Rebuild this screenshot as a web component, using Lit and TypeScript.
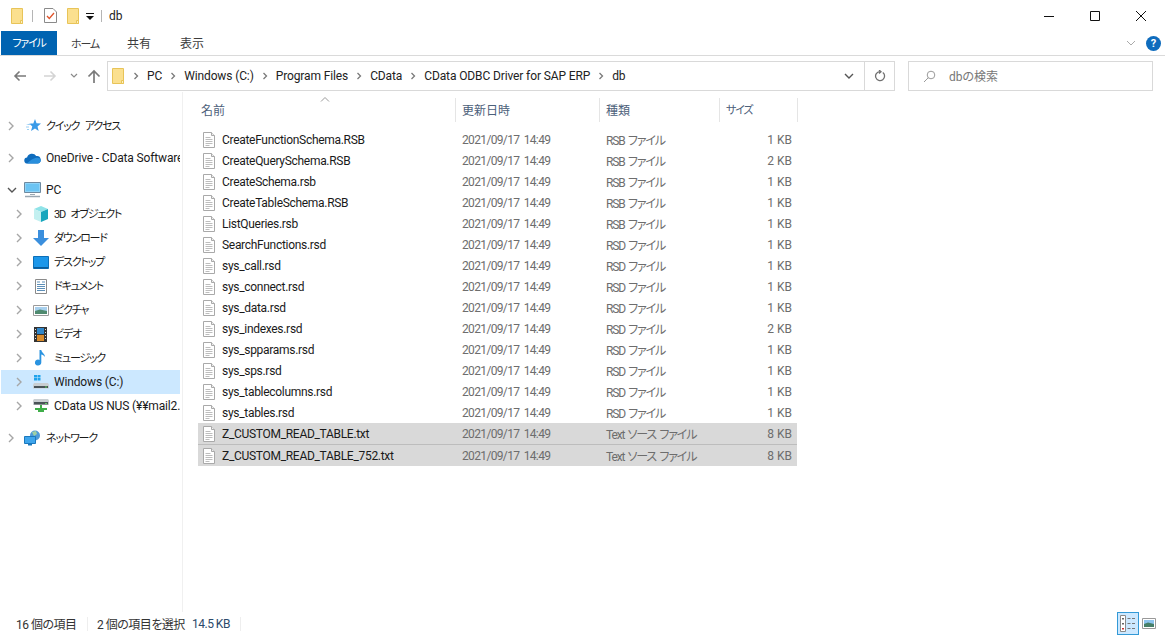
import { LitElement, css, html, svg } from "lit";
import { customElement } from "lit/decorators.js";

const folder = svg`<svg class="ic" width="14" height="16" viewBox="0 0 14 16"><path d="M1.500 .5h11v15h-11z" fill="#fbe08f" stroke="#e8c458"/><path d="M10.500 12.500h2v3h-2z" fill="#fdf0c0" stroke="#e8c458"/></svg>`;

const chevR = svg`<svg width="8" height="10" viewBox="0 0 8 10"><path d="M2 1l4 4-4 4" fill="none" stroke="#a6a6a6" stroke-width="1.400"/></svg>`;
const crumbSep = svg`<svg width="6" height="8" viewBox="0 0 6 8"><path d="M1.500 1l3 3-3 3" fill="none" stroke="#7a7a7a" stroke-width="1.300"/></svg>`;
const chevD = svg`<svg width="10" height="8" viewBox="0 0 10 8"><path d="M1 2l4 4 4-4" fill="none" stroke="#555" stroke-width="1.400"/></svg>`;

const fileIcon = svg`<svg width="14" height="16" viewBox="0 0 14 16"><path d="M1.500 .5h8l3 3v12h-11z" fill="#fff" stroke="#a9a9a9"/><path d="M9.500 .5v3h3" fill="#eee" stroke="#a9a9a9"/><path d="M3.500 5.500h5M3.500 7.500h7M3.500 9.500h7M3.500 11.500h7M3.500 13.500h4" stroke="#bdbdbd"/></svg>`;

const navIcons: Record<string, unknown> = {
  star: svg`<svg width="16" height="16" viewBox="0 0 16 16"><path d="M10 1l1.500 4.200 4.500.3-3.500 2.900 1.200 4.600-3.700-2.600L6 13l1.300-4.600-2-1.800L1 6.500l5-.9H8.300z" fill="#3a9be8"/><path d="M1 9h3M2 11.500h2" stroke="#9cd0f5"/></svg>`,
  cloud: svg`<svg width="17" height="12" viewBox="0 0 17 12"><path d="M3.500 11.500a3 3 0 0 1-.4-6A5 5 0 0 1 12.200 4a3.800 3.800 0 0 1 1.300 7.500z" fill="#0f6cbd"/><path d="M3 11.500h11a3 3 0 0 0 2-5C13 5 9 6 3 11.500z" fill="#2a8fdc"/></svg>`,
  pc: svg`<svg width="17" height="16" viewBox="0 0 17 16"><path d="M.5 .5h16v10H.5z" fill="#8fd3f7" stroke="#6e8aa0"/><path d="M2 2h13v7H2z" fill="#6cc4f3"/><path d="M6 12h5v1H6z" fill="#9aa7b1"/><path d="M1 14.500h15" stroke="#9aa7b1" stroke-width="1.500"/></svg>`,
  cube: svg`<svg width="16" height="16" viewBox="0 0 16 16"><path d="M8 0l7 3-7 3-7-3z" fill="#8fe3e8"/><path d="M1 3l7 3v10l-7-3z" fill="#c3f0f0"/><path d="M15 3L8 6v10l7-3z" fill="#17a6bd"/></svg>`,
  down: svg`<svg width="16" height="16" viewBox="0 0 16 16"><path d="M5 0h6v8h5l-8 8-8-8h5z" fill="#3b8fdd"/></svg>`,
  desk: svg`<svg width="16" height="13" viewBox="0 0 16 13"><path d="M.5 .5h15v12H.5z" fill="#1c97ea" stroke="#0c6fb8"/><path d="M1 11h14v1.500H1z" fill="#0b5c99"/></svg>`,
  doc: svg`<svg width="12" height="15" viewBox="0 0 12 15"><path d="M.5 .5h11v14H.5z" fill="#fff" stroke="#8a8a8a"/><path d="M2 3h3M7 3h3M2 5.500h8M2 7.500h8M2 9.500h8M2 11.500h8" stroke="#5d8fb8"/></svg>`,
  pic: svg`<svg width="16" height="11" viewBox="0 0 16 11"><path d="M.5 .5h15v10H.5z" fill="#fff" stroke="#9a9a9a"/><path d="M2 2h12v4H2z" fill="#a8d0ee"/><path d="M2 6l5-1.500L14 6v3H2z" fill="#4f8a6f"/></svg>`,
  film: svg`<svg width="13" height="15" viewBox="0 0 13 15"><path d="M0 0h13v15H0z" fill="#333"/><path d="M3 1h7v6H3z" fill="#2f86c9"/><path d="M3 8h7v6H3z" fill="#d98b2b"/><path d="M1 2h1v1H1zM1 5h1v1H1zM1 8h1v1H1zM1 11h1v1H1zM11 2h1v1h-1zM11 5h1v1h-1zM11 8h1v1h-1zM11 11h1v1h-1z" fill="#ddd"/></svg>`,
  note: svg`<svg width="11" height="16" viewBox="0 0 11 16"><path d="M4.500 0h1.800c.4 2.500 3.500 3.500 3.700 7-1-1.500-2.500-2.300-3.700-2.500v8a3.200 3 0 1 1-1.800-2.600z" fill="#2a93e0"/></svg>`,
  win: svg`<svg width="16" height="14" viewBox="0 0 16 14"><path d="M1 0h3v2.500H1zM4.500 0h3v2.500h-3zM1 3h3v2.500H1zM4.500 3h3v2.500h-3z" fill="#1fa3ec"/><path d="M1 8h14l1 2v3.500H0V10z" fill="#c9ced1"/><path d="M1 11h14v2H1z" fill="#4a5357"/><path d="M12 11.500h2v1h-2z" fill="#5fd35f"/></svg>`,
  net: svg`<svg width="16" height="16" viewBox="0 0 16 16"><path d="M1 1h14l1 1.500V7H0V2.500z" fill="#c9ced1"/><path d="M1 4h14v2.500H1z" fill="#4a5357"/><path d="M12 5h2v1h-2z" fill="#5fd35f"/><path d="M7 7h2v3h5v2H2v-2h5z" fill="#3fae49"/><path d="M5 12h6v2H5z" fill="#3fae49"/></svg>`,
  globe: svg`<svg width="17" height="16" viewBox="0 0 17 16"><circle cx="11" cy="5.500" r="5" fill="#4e9ad8"/><path d="M8 2l4-1 1 3-3 2z" fill="#9fd0a4"/><path d="M.5 6.500h11v7H.5z" fill="#3ea5ec" stroke="#1b78bd"/><path d="M4 14h4v1.500H4z" fill="#1b78bd"/></svg>`,
};

type NavRow = { label: string; icon: string; level: number; open?: boolean; sel?: boolean; gap?: boolean; jp?: boolean };

const navRows: NavRow[] = [
  { label: "クイック アクセス", icon: "star", level: 0, jp: true },
  { label: "OneDrive - CData Software", icon: "cloud", level: 0, gap: true },
  { label: "PC", icon: "pc", level: 0, open: true, gap: true },
  { label: "3D オブジェクト", icon: "cube", level: 1, jp: true },
  { label: "ダウンロード", icon: "down", level: 1, jp: true },
  { label: "デスクトップ", icon: "desk", level: 1, jp: true },
  { label: "ドキュメント", icon: "doc", level: 1, jp: true },
  { label: "ピクチャ", icon: "pic", level: 1, jp: true },
  { label: "ビデオ", icon: "film", level: 1, jp: true },
  { label: "ミュージック", icon: "note", level: 1, jp: true },
  { label: "Windows (C:)", icon: "win", level: 1, sel: true },
  { label: "CData US NUS (¥¥mail2.cdata.jp)", icon: "net", level: 1 },
  { label: "ネットワーク", icon: "globe", level: 0, gap: true, jp: true },
];

const files: [string, string, string, boolean?][] = [
  ["CreateFunctionSchema.RSB", "RSB ファイル", "1 KB"],
  ["CreateQuerySchema.RSB", "RSB ファイル", "2 KB"],
  ["CreateSchema.rsb", "RSB ファイル", "1 KB"],
  ["CreateTableSchema.RSB", "RSB ファイル", "1 KB"],
  ["ListQueries.rsb", "RSB ファイル", "1 KB"],
  ["SearchFunctions.rsd", "RSD ファイル", "1 KB"],
  ["sys_call.rsd", "RSD ファイル", "1 KB"],
  ["sys_connect.rsd", "RSD ファイル", "1 KB"],
  ["sys_data.rsd", "RSD ファイル", "1 KB"],
  ["sys_indexes.rsd", "RSD ファイル", "2 KB"],
  ["sys_spparams.rsd", "RSD ファイル", "1 KB"],
  ["sys_sps.rsd", "RSD ファイル", "1 KB"],
  ["sys_tablecolumns.rsd", "RSD ファイル", "1 KB"],
  ["sys_tables.rsd", "RSD ファイル", "1 KB"],
  ["Z_CUSTOM_READ_TABLE.txt", "Text ソース ファイル", "8 KB", true],
  ["Z_CUSTOM_READ_TABLE_752.txt", "Text ソース ファイル", "8 KB", true],
];

const crumbs = ["PC", "Windows (C:)", "Program Files", "CData", "CData ODBC Driver for SAP ERP", "db"];

@customElement("app-root")
export class AppRoot extends LitElement {
  render() {
    return html`
      <div class="title">
        ${folder}
        <span class="qsep"></span>
        <svg class="check" width="13" height="15" viewBox="0 0 13 15"><path d="M.5 .5h8.500l3.500 3.500v10.500H.5z" fill="#fff" stroke="#8a8a8a"/><path d="M3 8l2.300 2.500L10 5" fill="none" stroke="#e0532a" stroke-width="1.300"/></svg>
        ${folder}
        <svg class="drop" width="8" height="8" viewBox="0 0 8 8"><path d="M0 0h8v1H0zM0 3h8L4 7z" fill="#111"/></svg>
        <span class="qsep last"></span>
        <span class="title-text">db</span>
        <div class="winbtns">
          <svg width="12" height="12" viewBox="0 0 12 12"><path d="M1 6.500h10" stroke="#111"/></svg>
          <svg width="12" height="12" viewBox="0 0 12 12"><path d="M1.500 1.500h9v9h-9z" fill="none" stroke="#111"/></svg>
          <svg width="12" height="12" viewBox="0 0 12 12"><path d="M1 1l10 10M11 1L1 11" stroke="#111"/></svg>
        </div>
      </div>

      <div class="tabs">
        <span class="tab file"><span class="jp">ファイル</span></span>
        <span class="tab home jp">ホーム</span>
        <span class="tab share">共有</span>
        <span class="tab view">表示</span>
        <div class="tab-right">
          <svg width="10" height="6" viewBox="0 0 10 6"><path d="M1 1l4 4 4-4" fill="none" stroke="#aaa"/></svg>
          <span class="help">?</span>
        </div>
      </div>

      <div class="addr-row">
        <div class="nav-btns">
          <svg width="14" height="12" viewBox="0 0 14 12"><path d="M13 6H2M6.500 1.500L2 6l4.500 4.500" fill="none" stroke="#7a7a7a" stroke-width="1.600"/></svg>
          <svg class="fwd" width="14" height="12" viewBox="0 0 14 12"><path d="M1 6h11M7.500 1.500L12 6l-4.500 4.500" fill="none" stroke="#d4d4d4" stroke-width="1.600"/></svg>
          <svg class="recent" width="8" height="6" viewBox="0 0 8 6"><path d="M1 1l3 3 3-3" fill="none" stroke="#8a8a8a" stroke-width="1.200"/></svg>
          <svg class="up" width="14" height="14" viewBox="0 0 14 14"><path d="M7 14V2M1.500 7.500L7 2l5.500 5.500" fill="none" stroke="#7a7a7a" stroke-width="1.700"/></svg>
        </div>
        <div class="addr">
          <div class="crumbs">
            ${folder}
            ${crumbs.map(c => html`<span class="csep">${crumbSep}</span><span>${c}</span>`)}
          </div>
          <span class="addr-drop">${chevD}</span>
          <span class="addr-refresh">
            <svg width="12" height="12" viewBox="0 0 12 12"><path d="M8.800 2.500a4.500 4.500 0 1 1-3-.9M5 0l2 1.700L5 3.400" fill="none" stroke="#707070" stroke-width="1.300"/></svg>
          </span>
        </div>
        <div class="search">
          <svg width="13" height="13" viewBox="0 0 13 13"><circle cx="8" cy="5" r="3.800" fill="none" stroke="#9a9a9a"/><path d="M5.300 7.700L1 12" stroke="#9a9a9a"/></svg>
          <span class="search-text">dbの検索</span>
        </div>
      </div>

      <div class="body">
        <nav class="side">
          ${navRows.map(r => html`
            <div class="nrow l${r.level} ${r.sel ? "sel" : ""} ${r.gap ? "gap" : ""}">
              <span class="arrow">${r.open ? chevD : chevR}</span>
              <span class="nicon">${navIcons[r.icon]}</span>
              <span class="nlabel ${r.jp ? "jp" : ""}">${r.label}</span>
            </div>`)}
        </nav>
        <main class="list">
          <div class="head">
            <div class="hcell name"><span class="up1">名前</span><svg class="sort" width="10" height="5" viewBox="0 0 10 5"><path d="M1 4.500l4-4 4 4" fill="none" stroke="#9a9a9a"/></svg></div>
            <div class="hcell date"><span class="up1">更新日時</span></div>
            <div class="hcell type"><span class="up1">種類</span></div>
            <div class="hcell size"><span class="jp">サイズ</span></div>
          </div>
          <div class="rows">
            ${files.map(f => html`
              <div class="row ${f[3] ? "picked" : ""}">
                <div class="cell name">${fileIcon}<span>${f[0]}</span></div>
                <div class="cell date">2021/09/17 14:49</div>
                <div class="cell type">${f[1]}</div>
                <div class="cell size">${f[2]}</div>
              </div>`)}
          </div>
        </main>
      </div>

      <footer class="status">
        <span class="count">16 個の項目</span>
        <span class="ssep"></span>
        <span class="chosen">2 個の項目を選択</span>
        <span class="bytes">14.5 KB</span>
        <span class="ssep"></span>
        <div class="views">
          <span class="vbtn on">
            <svg width="16" height="17" viewBox="0 0 16 17"><path d="M.5 .5h5v16h-5z" fill="#fff" stroke="#8a8a8a"/><path d="M2 3h2v1.500H2zM2 8h2v1.500H2z" fill="#666"/><path d="M2 13h2v1.500H2z" fill="#c33"/><path d="M7.500 3.500h3M12 3.500h3M7.500 8.500h3M12 8.500h3M7.500 13.500h3M12 13.500h3" stroke="#777" stroke-width="1.200"/></svg>
          </span>
          <span class="vbtn">
            <svg width="14" height="11" viewBox="0 0 14 11"><path d="M.5 .5h13v10H.5z" fill="#fff" stroke="#999"/><path d="M2 2h10v4H2z" fill="#8cc4ee"/><path d="M2 6l4-1.500L12 6v3H2z" fill="#467f68"/></svg>
          </span>
        </div>
      </footer>
    `;
  }

  static styles = css`
    :host {
      display: flex;
      flex-direction: column;
      width: 1165px;
      height: 636px;
      overflow: hidden;
      background: #fff;
      color: #1a1a1a;
      font-family: Roboto, "Noto Sans CJK JP", sans-serif;
      font-size: 12px;
      font-feature-settings: "palt";
    }

    svg {
      display: block;
      flex: none;
    }

    /* kana in the reference is much narrower than Noto's */
    .jp {
      font-size: 11px;
      letter-spacing: -1.2px;
      margin-bottom: 2px;
    }

    .up1 {
      margin-bottom: 2px;
    }

    .title {
      display: flex;
      align-items: center;
      height: 31px;
      padding-left: 10px;
    }

    .qsep {
      width: 1px;
      height: 12px;
      margin: 0 11px 0 8px;
      background: #b5b5b5;
    }

    .qsep.last {
      margin: 0 7px 0 7px;
    }

    .check {
      margin-right: 9px;
    }

    .drop {
      margin-left: 6px;
      margin-top: 2px;
    }

    .title-text {
      font-size: 12px;
      color: #222;
    }

    .winbtns {
      display: flex;
      margin-left: auto;
      gap: 34px;
      padding-right: 18px;
    }

    .tabs {
      display: flex;
      align-items: center;
      height: 24px;
      border-bottom: 1px solid #dadada;
      padding-left: 1px;
      flex: none;
    }

    .tab {
      color: #3c3c3c;
    }

    .tab.file {
      display: flex;
      align-items: center;
      justify-content: center;
      width: 56px;
      height: 24px;
      background: #0063b1;
      color: #fff;
    }

    .tab.home {
      margin-left: 14px;
      margin-bottom: 0;
    }

    .tab.share {
      margin-left: 28px;
      margin-bottom: 2px;
    }

    .tab.view {
      margin-left: 29px;
      margin-bottom: 2px;
    }

    .tab-right {
      display: flex;
      align-items: center;
      gap: 10px;
      margin-left: auto;
      padding-right: 4px;
    }

    .help {
      display: flex;
      align-items: center;
      justify-content: center;
      width: 15px;
      height: 15px;
      border-radius: 50%;
      background: #0f6cbd;
      color: #fff;
      font-weight: 700;
      font-size: 11px;
      line-height: 1;
    }

    .addr-row {
      display: flex;
      align-items: center;
      height: 30px;
      margin-top: 5px;
      flex: none;
    }

    .nav-btns {
      display: flex;
      align-items: center;
      width: 107px;
      padding-left: 13px;
      box-sizing: border-box;
    }

    .fwd {
      margin-left: 16px;
    }

    .recent {
      margin-left: 13px;
    }

    .up {
      margin-left: 9px;
    }

    .addr {
      display: flex;
      align-items: center;
      width: 788px;
      height: 30px;
      box-sizing: border-box;
      border: 1px solid #d9d9d9;
      padding-left: 3px;
    }

    .crumbs {
      display: flex;
      align-items: center;
      flex: 1;
      color: #222;
      letter-spacing: -0.12px;
    }

    .csep {
      margin: 0 8px;
    }

    .addr-drop {
      width: 14px;
      margin-right: 6px;
    }

    .addr-refresh {
      display: flex;
      align-items: center;
      justify-content: center;
      width: 29px;
      height: 28px;
      border-left: 1px solid #d9d9d9;
    }

    .search {
      display: flex;
      align-items: center;
      gap: 13px;
      width: 245px;
      height: 30px;
      box-sizing: border-box;
      margin-left: 13px;
      border: 1px solid #d9d9d9;
      padding-left: 14px;
      color: #777;
    }

    .search-text {
      margin-bottom: 2px;
    }

    .body {
      display: flex;
      flex: 1;
      min-height: 0;
      padding-top: 1px;
    }

    .side {
      width: 183px;
      box-sizing: border-box;
      flex: none;
      border-right: 1px solid #f0f0f0;
      padding: 22px 2px 0 1px;
      overflow: hidden;
    }

    .nrow {
      display: flex;
      align-items: center;
      height: 24px;
      white-space: nowrap;
      overflow: hidden;
    }

    .nrow.gap {
      margin-top: 8px;
    }

    .nrow.sel {
      background: #cce8ff;
    }

    .arrow {
      flex: none;
      width: 10px;
      margin-right: 7px;
    }

    .nrow.l0 {
      padding-left: 6px;
    }

    .nrow.l1 {
      padding-left: 14px;
    }

    .nicon {
      flex: none;
      display: flex;
      align-items: center;
      justify-content: center;
      width: 17px;
      margin-right: 5px;
    }

    .nlabel {
      letter-spacing: -0.15px;
    }

    .nlabel.jp {
      letter-spacing: -1.2px;
      word-spacing: 4px;
    }

    .list {
      flex: 1;
      padding: 6px 0 0 15px;
    }

    .head {
      display: flex;
      height: 24px;
    }

    .hcell {
      display: flex;
      align-items: center;
      box-sizing: border-box;
      height: 24px;
      padding-left: 6px;
      border-right: 1px solid #e5e5e5;
      color: #4c607a;
    }

    .hcell.name {
      position: relative;
      padding-left: 3px;
    }

    .sort {
      position: absolute;
      top: -1px;
      left: 122px;
    }

    .name {
      width: 258px;
    }

    .date {
      width: 144px;
    }

    .type {
      width: 120px;
    }

    .size {
      width: 78px;
    }

    .rows {
      margin-top: 7px;
    }

    .row {
      display: flex;
      align-items: center;
      width: 599px;
      height: 21px;
    }

    .row.picked {
      background: #d9d9d9;
    }

    .row.picked + .row.picked {
      border-top: 1px solid #bdbdbd;
    }

    .cell {
      box-sizing: border-box;
      white-space: nowrap;
    }

    .cell.name {
      display: flex;
      align-items: center;
      gap: 6px;
      padding-left: 4px;
      color: #1a1a1a;
      letter-spacing: -0.3px;
    }

    .cell.date {
      padding-left: 6px;
      color: #6d6d6d;
      letter-spacing: -0.65px;
      word-spacing: 2px;
    }

    .cell.type {
      padding-left: 6px;
      color: #6d6d6d;
      letter-spacing: -1.15px;
      word-spacing: 1.5px;
    }

    .cell.size {
      width: 77px;
      padding-right: 5px;
      text-align: right;
      color: #6d6d6d;
    }

    .status {
      display: flex;
      align-items: center;
      height: 24px;
      padding-left: 16px;
      padding-bottom: 1px;
      box-sizing: border-box;
      color: #333;
      flex: none;
      letter-spacing: -0.5px;
    }

    .ssep {
      width: 1px;
      height: 14px;
      background: #eee;
    }

    .count {
      width: 71px;
    }

    .chosen {
      margin-left: 9px;
      width: 95px;
    }

    .bytes {
      width: 48px;
      color: #2c4a6b;
    }

    .views {
      display: flex;
      align-items: center;
      gap: 3px;
      margin-left: auto;
      padding-right: 9px;
    }

    .vbtn {
      display: flex;
      align-items: center;
      justify-content: center;
      width: 22px;
      height: 23px;
      box-sizing: border-box;
    }

    .vbtn + .vbtn {
      width: 14px;
    }

    .vbtn.on {
      background: #cce8ff;
      border: 1px solid #3399d6;
    }
  `;
}
